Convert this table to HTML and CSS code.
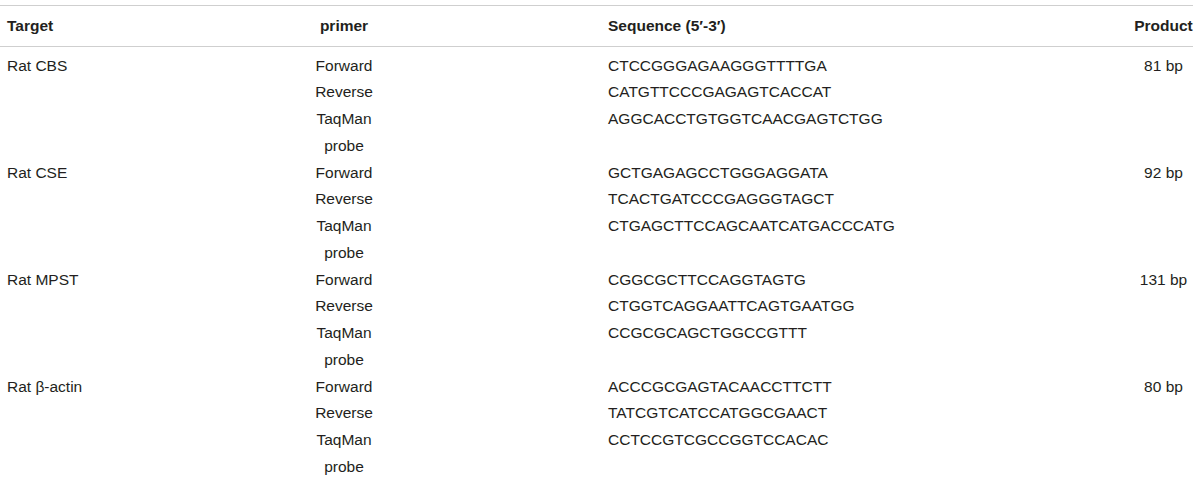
FILE: index.html
```html
<!DOCTYPE html>
<html lang="en">
<head>
<meta charset="utf-8">
<title>Primers</title>
<link rel="stylesheet" href="styles.css">
</head>
<body>
<table class="primers">
  <colgroup>
    <col class="c-target">
    <col class="c-primer">
    <col class="c-seq">
    <col class="c-product">
  </colgroup>
  <thead>
    <tr>
      <th class="target">Target</th>
      <th class="primer">primer</th>
      <th class="seq">Sequence (5′-3′)</th>
      <th class="product">Product</th>
    </tr>
  </thead>
  <tbody>
    <tr class="first"><td class="target">Rat CBS</td><td class="primer">Forward</td><td class="seq">CTCCGGGAGAAGGGTTTTGA</td><td class="product">81 bp</td></tr>
    <tr><td class="target"></td><td class="primer">Reverse</td><td class="seq">CATGTTCCCGAGAGTCACCAT</td><td class="product"></td></tr>
    <tr><td class="target"></td><td class="primer">TaqMan<br>probe</td><td class="seq">AGGCACCTGTGGTCAACGAGTCTGG</td><td class="product"></td></tr>
    <tr><td class="target">Rat CSE</td><td class="primer">Forward</td><td class="seq">GCTGAGAGCCTGGGAGGATA</td><td class="product">92 bp</td></tr>
    <tr><td class="target"></td><td class="primer">Reverse</td><td class="seq">TCACTGATCCCGAGGGTAGCT</td><td class="product"></td></tr>
    <tr><td class="target"></td><td class="primer">TaqMan<br>probe</td><td class="seq">CTGAGCTTCCAGCAATCATGACCCATG</td><td class="product"></td></tr>
    <tr><td class="target">Rat MPST</td><td class="primer">Forward</td><td class="seq">CGGCGCTTCCAGGTAGTG</td><td class="product">131 bp</td></tr>
    <tr><td class="target"></td><td class="primer">Reverse</td><td class="seq">CTGGTCAGGAATTCAGTGAATGG</td><td class="product"></td></tr>
    <tr><td class="target"></td><td class="primer">TaqMan<br>probe</td><td class="seq">CCGCGCAGCTGGCCGTTT</td><td class="product"></td></tr>
    <tr><td class="target">Rat β-actin</td><td class="primer">Forward</td><td class="seq">ACCCGCGAGTACAACCTTCTT</td><td class="product">80 bp</td></tr>
    <tr><td class="target"></td><td class="primer">Reverse</td><td class="seq">TATCGTCATCCATGGCGAACT</td><td class="product"></td></tr>
    <tr><td class="target"></td><td class="primer">TaqMan<br>probe</td><td class="seq">CCTCCGTCGCCGGTCCACAC</td><td class="product"></td></tr>
  </tbody>
</table>
</body>
</html>
```

FILE: styles.css
```css
html, body {
  margin: 0;
  padding: 0;
  background: #ffffff;
}

body {
  font-family: "Liberation Sans", Arial, Helvetica, sans-serif;
  font-size: 15.5px;
  color: #231f20;
}

.primers {
  margin-top: 5px;
  width: 1193px;
  border-collapse: collapse;
  table-layout: fixed;
}

.c-target { width: 88px; }
.c-primer { width: 512px; }
.c-seq { width: 534px; }
.c-product { width: 59px; }

.primers th,
.primers td {
  padding: 0;
  line-height: 26.75px;
  vertical-align: top;
  white-space: nowrap;
}

.primers thead tr {
  border-top: 1px solid #cfcfcf;
  border-bottom: 1px solid #cfcfcf;
}

.primers th {
  font-weight: bold;
  padding-top: 6.6px;
  padding-bottom: 6.6px;
}

.primers tr.first td {
  padding-top: 5.7px;
}

.target {
  text-align: left;
  padding-left: 7px !important;
}

.primer {
  text-align: center;
}

.seq {
  text-align: left;
  padding-left: 8px !important;
}

.product {
  text-align: center;
}
```
